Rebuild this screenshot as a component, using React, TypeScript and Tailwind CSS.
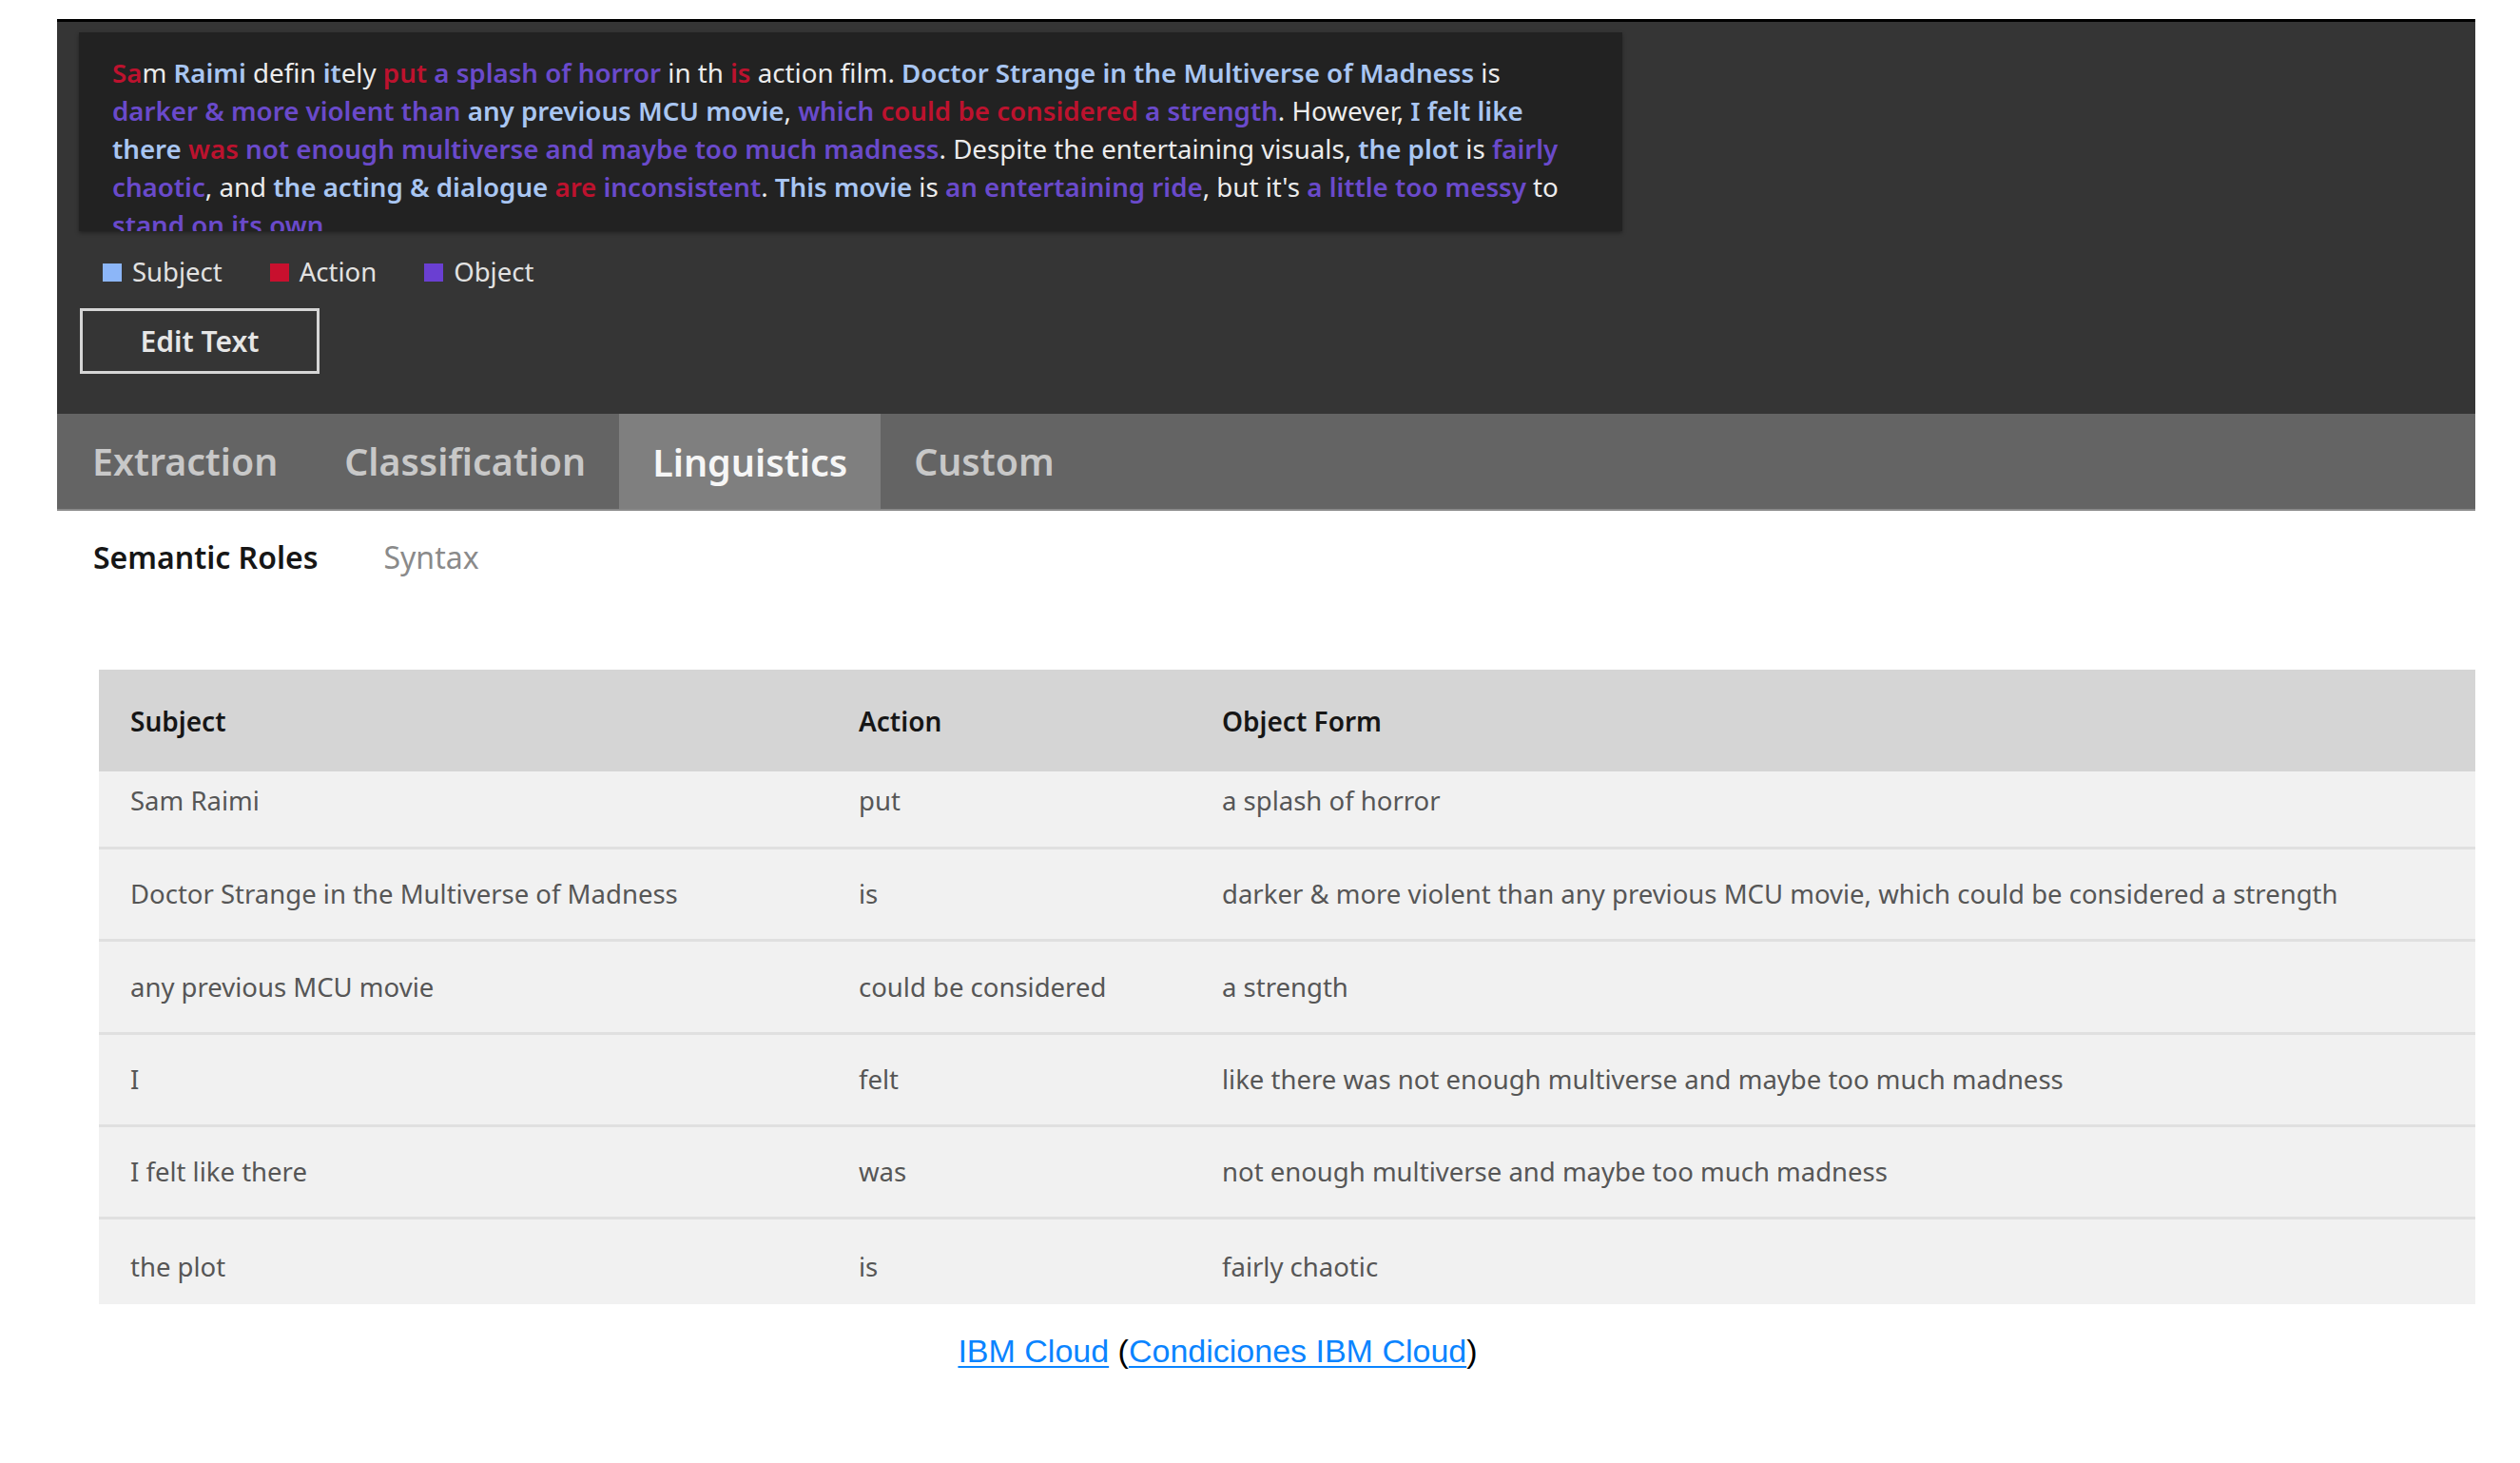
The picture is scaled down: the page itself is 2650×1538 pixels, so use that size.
import type { ReactNode } from 'react'

const S = ({ children }: { children: ReactNode }) => (
  <span className="font-semibold text-[#a9c6f2]">{children}</span>
)
const A = ({ children }: { children: ReactNode }) => (
  <span className="font-semibold text-[#bd122e]">{children}</span>
)
const O = ({ children }: { children: ReactNode }) => (
  <span className="font-semibold text-[#6a4acb]">{children}</span>
)

const tabs = ['Extraction', 'Classification', 'Linguistics', 'Custom']

const rows = [
  ['Sam Raimi', 'put', 'a splash of horror'],
  [
    'Doctor Strange in the Multiverse of Madness',
    'is',
    'darker & more violent than any previous MCU movie, which could be considered a strength',
  ],
  ['any previous MCU movie', 'could be considered', 'a strength'],
  ['I', 'felt', 'like there was not enough multiverse and maybe too much madness'],
  ['I felt like there', 'was', 'not enough multiverse and maybe too much madness'],
  ['the plot', 'is', 'fairly chaotic'],
]

const rowStyles = [
  'h-[82px] pb-[18px]',
  'h-[97px]',
  'h-[98px]',
  'h-[97px]',
  'h-[97px]',
  'h-[89px] pt-[10px]',
]

export default function App() {
  return (
    <div className="min-h-screen bg-white pt-[20px] font-['Noto_Sans',sans-serif]">
      <div className="ml-[60px] w-[2543px]">
        {/* dark input panel */}
        <div className="border-t-[3px] border-black bg-[#353535] px-[23px] pt-[11px] pb-[42px]">
          <div className="h-[209px] w-[1623px] overflow-hidden bg-[#222222] px-[35px] pt-[22px] text-[27.7px] leading-[40px] whitespace-nowrap text-[#ececec] shadow-[0_2px_4px_rgba(0,0,0,0.35)]">
            <A>Sa</A>m <S>Raimi</S> defin <S>it</S>ely <A>put</A> <O>a splash of horror</O> in th{' '}
            <A>is</A> action film. <S>Doctor Strange in the Multiverse of Madness</S> is
            <br />
            <O>darker &amp; more violent than</O> <S>any previous MCU movie</S>, <O>which</O>{' '}
            <A>could be considered</A> <O>a strength</O>. However, <S>I felt like</S>
            <br />
            <S>there</S> <A>was</A> <O>not enough multiverse and maybe too much madness</O>. Despite the
            entertaining visuals, <S>the plot</S> is <O>fairly</O>
            <br />
            <O>chaotic</O>, and <S>the acting &amp; dialogue</S> <A>are</A> <O>inconsistent</O>.{' '}
            <S>This movie</S> is <O>an entertaining ride</O>, but it's <O>a little too messy</O> to
            <br />
            <O>stand on its own</O>.
          </div>

          <div className="mt-[25px] flex h-[36px] items-center gap-[50px] pl-[25px] text-[27.5px] text-[#e2e2e2]">
            <div className="flex items-center gap-[11px]">
              <span className="h-[19px] w-[20px] bg-[#8cb6f8]" />
              Subject
            </div>
            <div className="flex items-center gap-[11px]">
              <span className="h-[19px] w-[20px] bg-[#c8102e]" />
              Action
            </div>
            <div className="flex items-center gap-[11px]">
              <span className="h-[19px] w-[20px] bg-[#6a3fd2]" />
              Object
            </div>
          </div>

          <button className="mt-[20px] ml-px flex h-[69px] w-[252px] items-center justify-center border-[3px] border-[#d6d6d6] text-[30px] font-semibold text-[#e6e6e6]">
            Edit Text
          </button>
        </div>

        {/* tab bar */}
        <div className="flex h-[102px] border-b-2 border-[#8a8a8a] bg-[#646464] pl-[2px]">
          {tabs.map((t) => (
            <div
              key={t}
              className={
                t === 'Linguistics'
                  ? 'flex items-center bg-[#7f7f7f] px-[35px] pt-[4px] text-[39.5px] font-semibold text-[#f6f6f6]'
                  : 'flex items-center px-[35px] text-[39.3px] font-semibold text-[#c8c8c8]'
              }
            >
              {t}
            </div>
          ))}
        </div>

        {/* sub tabs */}
        <div className="mt-[29px] flex h-[40px] items-center gap-[69px] pl-[38px] text-[32px]">
          <span className="font-semibold text-[#161616]">Semantic Roles</span>
          <span className="text-[#8a8a8a]">Syntax</span>
        </div>

        {/* table */}
        <div className="mt-[98px] ml-[44px] text-[27.5px]">
          <div className="grid h-[107px] grid-cols-[766px_382px_1fr] items-center bg-[#d5d5d5] text-[28px] font-semibold text-[#161616]">
            <div className="pl-[33px]">Subject</div>
            <div className="pl-[33px]">Action</div>
            <div className="pl-[33px]">Object Form</div>
          </div>
          {rows.map((r, i) => (
            <div
              key={i}
              className={`grid grid-cols-[766px_382px_1fr] items-center bg-[#f1f1f1] text-[#565656] ${
                i < rows.length - 1 ? 'border-b-[3px] border-[#e0e0e0]' : ''
              } ${rowStyles[i]}`}
            >
              <div className="pl-[33px]">{r[0]}</div>
              <div className="pl-[33px]">{r[1]}</div>
              <div className="pl-[33px]">{r[2]}</div>
            </div>
          ))}
        </div>

        {/* footer link */}
        <div className="mt-[29px] flex justify-center pr-[102px] font-['Liberation_Sans',Arial,sans-serif] text-[34px] leading-[40px] text-black">
          <a href="#" className="text-[#0a84ff] underline decoration-2 underline-offset-4">
            IBM Cloud
          </a>
          <span>&nbsp;(</span>
          <a href="#" className="text-[#0a84ff] underline decoration-2 underline-offset-4">
            Condiciones IBM Cloud
          </a>
          <span>)</span>
        </div>
      </div>
    </div>
  )
}
